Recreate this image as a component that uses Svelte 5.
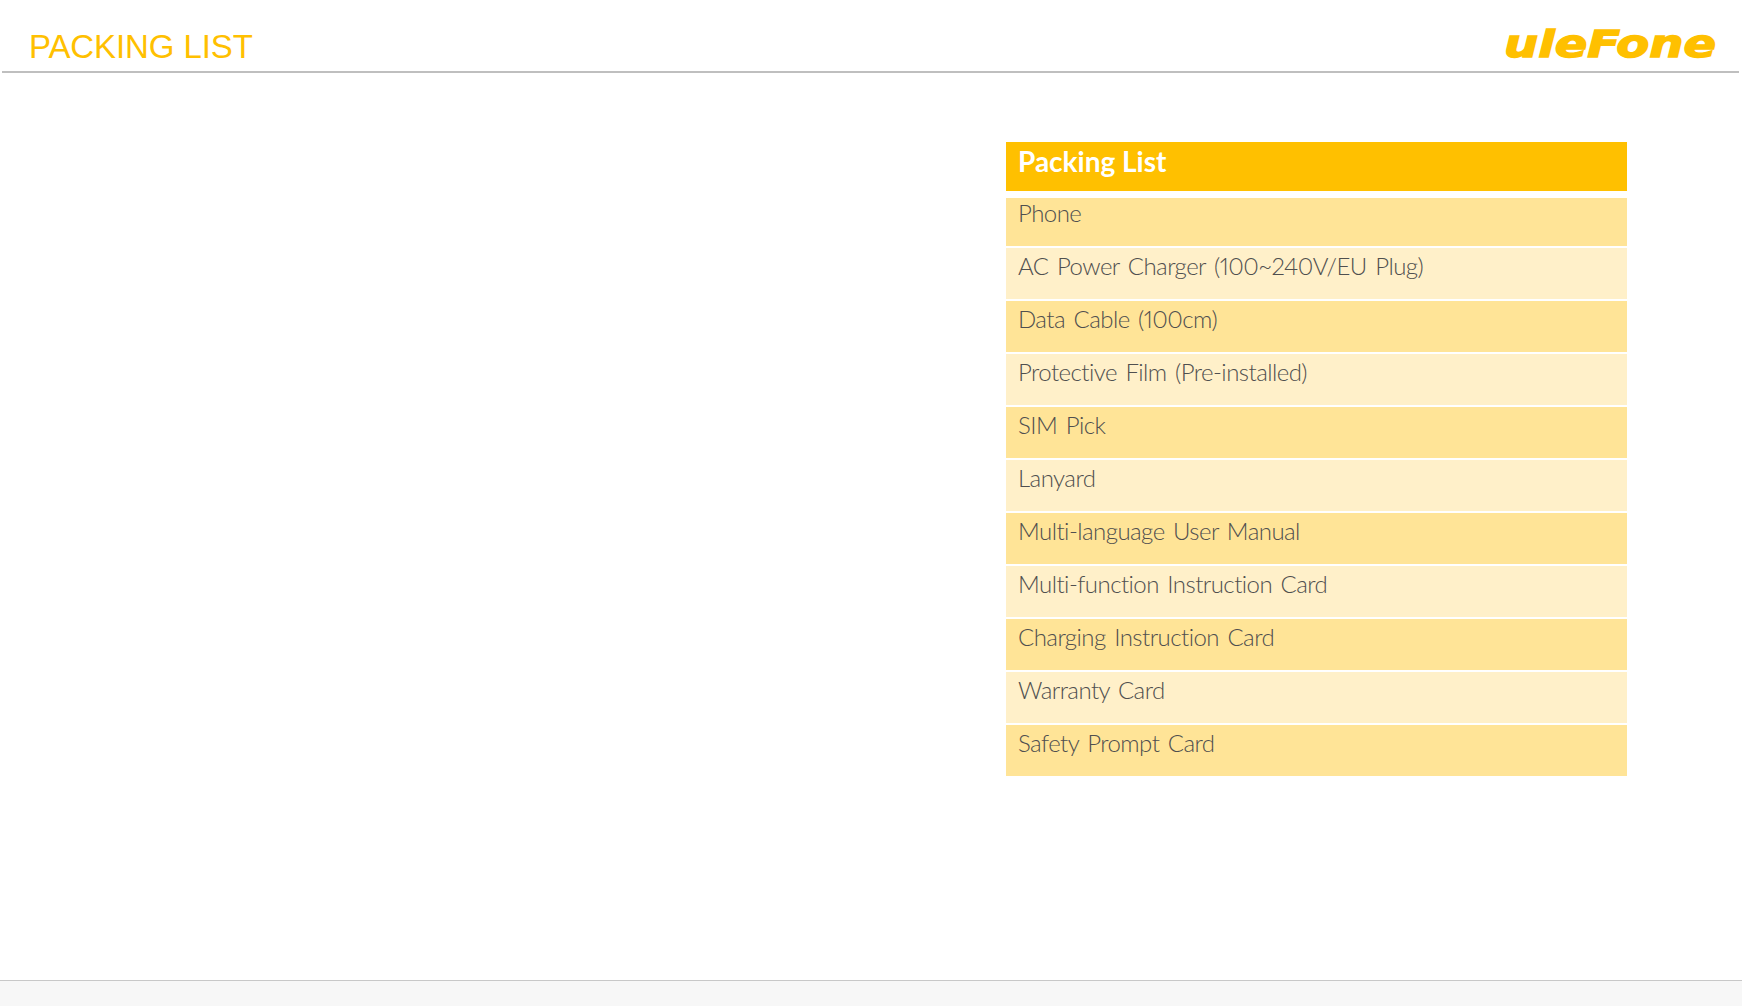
<script>
  const items = [
    'Phone',
    'AC Power Charger (100~240V/EU Plug)',
    'Data Cable (100cm)',
    'Protective Film (Pre-installed)',
    'SIM Pick',
    'Lanyard',
    'Multi-language User Manual',
    'Multi-function Instruction Card',
    'Charging Instruction Card',
    'Warranty Card',
    'Safety Prompt Card'
  ];
</script>

<div class="page">
  <header class="top">
    <h1>PACKING LIST</h1>
    <svg class="logo" width="216" height="40" viewBox="0 0 216 40" role="img" aria-label="ulefone">
      <text x="1" y="34" textLength="212" lengthAdjust="spacingAndGlyphs">uleFone</text>
    </svg>
  </header>

  <main class="content">
    <section class="list">
      <div class="list-head">Packing List</div>
      {#each items as item, i}
        <div class="row" class:first={i === 0} class:odd={i % 2 === 0}>{item}</div>
      {/each}
    </section>
  </main>

  <footer class="bottom"></footer>
</div>

<style>
  :global(body) {
    margin: 0;
    background: #fff;
  }

  .page {
    display: flex;
    flex-direction: column;
    height: 1006px;
    overflow: hidden;
  }

  .top {
    display: flex;
    align-items: flex-end;
    justify-content: space-between;
    height: 71px;
    margin: 0 3px 0 2px;
    padding: 0 20px 0 27px;
    border-bottom: 2px solid #bfbfbf;
  }

  h1 {
    margin: 0 0 4px;
    font: 400 33px/40px "Liberation Sans", Arial, sans-serif;
    letter-spacing: -0.1px;
    color: #ffc000;
  }

  .logo {
    margin-bottom: 8px;
    overflow: visible;
  }

  .logo text {
    font: italic 700 38px "DejaVu Sans", sans-serif;
    fill: #ffc000;
    stroke: #ffc000;
    stroke-width: 1.4px;
  }

  .content {
    flex: 1;
    display: flex;
    justify-content: flex-end;
    padding: 69px 115px 0 0;
  }

  .list {
    width: 621px;
    font-family: Lato, "Open Sans", sans-serif;
    font-variant-ligatures: none;
    font-variant-numeric: proportional-nums;
  }

  .list-head {
    height: 49px;
    margin-bottom: 7px;
    padding-left: 12px;
    box-sizing: border-box;
    background: #ffc000;
    color: #fff;
    font-size: 28px;
    font-weight: 700;
    line-height: 38px;
  }

  .row {
    height: 51px;
    margin-bottom: 2px;
    padding-left: 12px;
    box-sizing: border-box;
    background: #fff0c9;
    color: #4f4f4f;
    font-size: 24px;
    font-weight: 300;
    letter-spacing: -0.55px;
    word-spacing: 2.5px;
    line-height: 35px;
  }

  .row.odd {
    background: #ffe497;
  }

  .row.first {
    height: 48px;
    line-height: 30px;
  }

  .bottom {
    height: 25px;
    background: #f7f7f7;
    border-top: 1px solid #c8c8c8;
  }
</style>
